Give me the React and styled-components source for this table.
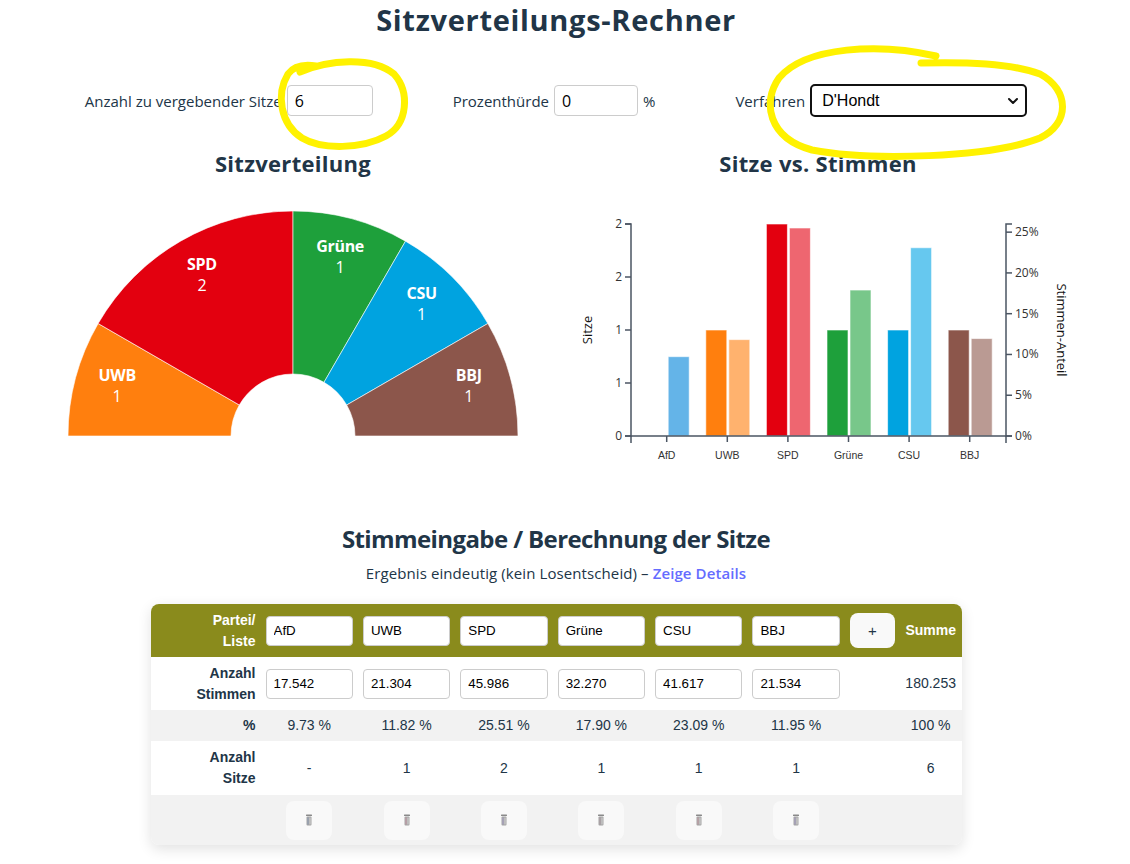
import React from "react";
import styled, { createGlobalStyle } from "styled-components";
import { ChevronDown } from "lucide-react";

const GlobalStyle = createGlobalStyle`
  body {
    margin: 0;
    background: #ffffff;
    color: #213547;
    font-family: "Segoe UI", "Open Sans", sans-serif;
  }
`;

const parties = [
  { name: "AfD", votes: "17.542", pct: 9.73, seats: 0, color: "#0489db", light: "#64b4e8", trash: "#8fa0b8" },
  { name: "UWB", votes: "21.304", pct: 11.82, seats: 1, color: "#ff7f0e", light: "#ffb26e", trash: "#c89aa8" },
  { name: "SPD", votes: "45.986", pct: 25.51, seats: 2, color: "#e3000f", light: "#ee6670", trash: "#a7a0c8" },
  { name: "Grüne", votes: "32.270", pct: 17.9, seats: 1, color: "#1ea03b", light: "#78c78a", trash: "#b0a0a8" },
  { name: "CSU", votes: "41.617", pct: 23.09, seats: 1, color: "#00a3e0", light: "#66c8ef", trash: "#c8a0a8" },
  { name: "BBJ", votes: "21.534", pct: 11.95, seats: 1, color: "#8c564b", light: "#ba9a93", trash: "#a8a0c8" },
];

const Page = styled.div`
  position: relative;
  width: 1112px;
  padding-bottom: 40px;
`;

const Title = styled.h1`
  margin: 0;
  font-size: 29px;
  line-height: 40px;
  font-weight: 700;
  text-align: center;
  letter-spacing: 0.7px;
`;

const Controls = styled.div`
  display: flex;
  justify-content: center;
  align-items: center;
  gap: 80px;
  margin-top: 44px;
  height: 33px;
`;

const Field = styled.label`
  display: flex;
  align-items: center;
  gap: 5px;
  font-size: 15px;
`;

const TextInput = styled.input`
  box-sizing: border-box;
  width: ${(p) => p.$w}px;
  height: 31px;
  padding: 0 7px;
  border: 1px solid #cccccc;
  border-radius: 4px;
  font-family: inherit;
  font-size: 16px;
  color: #000;
  background: #fff;
`;

const SelectWrap = styled.div`
  position: relative;
  display: flex;
  align-items: center;
`;

const Select = styled.select`
  appearance: none;
  box-sizing: border-box;
  width: 217px;
  height: 33px;
  padding: 0 10px;
  border: 2px solid #111;
  border-radius: 5px;
  font-family: "Liberation Sans", Arial, sans-serif;
  font-size: 16px;
  color: #000;
  background: #fff;
`;

const Chevron = styled(ChevronDown)`
  position: absolute;
  right: 6px;
  pointer-events: none;
`;

const ChartRow = styled.div`
  display: flex;
  gap: 50px;
  padding-left: 68px;
  margin-top: 31px;
`;

const ChartCol = styled.div`
  display: flex;
  flex-direction: column;
  align-items: center;
  width: ${(p) => p.$w}px;
`;

const SubHeading = styled.h2`
  margin: 0 0 22px;
  height: 30px;
  font-size: 22px;
  line-height: 30px;
  font-weight: 700;
  letter-spacing: 0.3px;
`;

const SectionHeading = styled.h2`
  margin: 59px 0 0;
  font-size: 24px;
  line-height: 30px;
  font-weight: 700;
  text-align: center;
  letter-spacing: -0.6px;
`;

const Note = styled.p`
  margin: 8px 0 0;
  font-size: 15px;
  line-height: 22px;
  text-align: center;
  letter-spacing: 0.1px;
`;

const DetailsLink = styled.a`
  color: #646cff;
  font-weight: 600;
  text-decoration: none;
`;

const TableCard = styled.div`
  width: 811px;
  margin: 20px auto 0;
  border-radius: 8px;
  overflow: hidden;
  box-shadow: 0 4px 14px rgba(0, 0, 0, 0.12);
`;

const Table = styled.table`
  width: 100%;
  border-collapse: collapse;
  table-layout: fixed;
  font-family: "Liberation Sans", Arial, sans-serif;
  font-size: 14px;
  line-height: 21px;
  color: #213547;
`;

const Row = styled.tr`
  height: ${(p) => p.$h}px;
  background: ${(p) => (p.$head ? "#8a8b1c" : p.$shade ? "#f2f2f2" : "#ffffff")};
  color: ${(p) => (p.$head ? "#ffffff" : "#213547")};
`;

const Label = styled.th`
  padding: 0 5px;
  text-align: right;
  font-weight: 700;
`;

const Cell = styled.td`
  padding: 0 5px;
  text-align: center;
  font-weight: ${(p) => (p.$bold ? 700 : 400)};
`;

const CellInput = styled.input`
  box-sizing: border-box;
  width: 100%;
  height: 30px;
  padding: 0 7px;
  border: 1px solid #cccccc;
  border-radius: 4px;
  font-family: "Liberation Sans", Arial, sans-serif;
  font-size: 13.33px;
  color: #000;
  background: #fff;
`;

const SoftButton = styled.button`
  display: inline-flex;
  align-items: center;
  justify-content: center;
  width: ${(p) => p.$w}px;
  height: ${(p) => p.$h}px;
  padding: 0;
  border: 1px solid transparent;
  border-radius: 8px;
  background: #f9f9f9;
  color: #213547;
  font-family: "Liberation Sans", Arial, sans-serif;
  font-size: 15px;
  cursor: pointer;
`;

const ChartSvg = styled.svg`
  overflow: visible;
`;

const Overlay = styled.svg`
  position: absolute;
  left: 0;
  top: 0;
  pointer-events: none;
`;

function arcPath(a0, a1, R, r, cx, cy) {
  const pt = (a, rad) => [cx + rad * Math.cos(a), cy - rad * Math.sin(a)];
  const [x0, y0] = pt(a0, R);
  const [x1, y1] = pt(a1, R);
  const [x2, y2] = pt(a1, r);
  const [x3, y3] = pt(a0, r);
  return `M${x0},${y0} A${R},${R} 0 0 1 ${x1},${y1} L${x2},${y2} A${r},${r} 0 0 0 ${x3},${y3} Z`;
}

function SeatPie() {
  const cx = 225;
  const cy = 236;
  const total = parties.reduce((s, p) => s + p.seats, 0);
  let start = Math.PI;
  const slices = parties
    .filter((p) => p.seats > 0)
    .map((p) => {
      const a0 = start;
      const a1 = start - (p.seats / total) * Math.PI;
      start = a1;
      const mid = (a0 + a1) / 2;
      return {
        ...p,
        d: arcPath(a0, a1, 225, 62, cx, cy),
        lx: cx + 182 * Math.cos(mid),
        ly: cy - 182 * Math.sin(mid),
      };
    });
  return (
    <ChartSvg width="450" height="240" fontFamily='"Segoe UI", "Open Sans", sans-serif'>
      {slices.map((s) => (
        <path key={s.name} d={s.d} fill={s.color} stroke="#ffffff" strokeWidth="0.6" />
      ))}
      {slices.map((s) => (
        <g key={s.name + "l"} fill="#ffffff" textAnchor="middle" fontSize="16">
          <text x={s.lx} y={s.ly - 8} fontWeight="700" letterSpacing="-0.3">
            {s.name}
          </text>
          <text x={s.lx} y={s.ly + 13}>
            {s.seats}
          </text>
        </g>
      ))}
    </ChartSvg>
  );
}

function SeatBars() {
  const left = 63;
  const right = 438;
  const top = 24;
  const base = 236;
  const h = base - top;
  const ySeat = (v) => base - (v / 2) * h;
  const yPct = (v) => base - (v / 26) * h;
  const axis = "#4b5563";
  const seatTicks = [0, 0.5, 1, 1.5, 2];
  const pctTicks = [0, 5, 10, 15, 20, 25];
  return (
    <ChartSvg width="500" height="265" fontFamily='"Segoe UI", "Open Sans", sans-serif'>
      {parties.map((p, i) => {
        const c = 98.7 + 60.6 * i;
        return (
          <g key={p.name}>
            {p.seats > 0 && (
              <rect x={c - 21.5} y={ySeat(p.seats)} width="21" height={base - ySeat(p.seats)} fill={p.color} stroke="#ffffff" strokeOpacity="0.6" />
            )}
            <rect x={c + 1.5} y={yPct(p.pct)} width="21" height={base - yPct(p.pct)} fill={p.light} stroke="#ffffff" strokeOpacity="0.6" />
            <line x1={c} x2={c} y1={base} y2={base + 6} stroke={axis} strokeWidth="1.5" />
            <text x={c} y={base + 23} textAnchor="middle" fontSize="10.5" fill="#333" fontFamily='"Liberation Sans", Arial, sans-serif'>
              {p.name}
            </text>
          </g>
        );
      })}
      <path d={`M${left},${base + 7} V${base} H${right} V${base + 7}`} fill="none" stroke={axis} strokeWidth="1.5" />
      <path d={`M${left - 6},${top} H${left} V${base} H${left - 6}`} fill="none" stroke={axis} strokeWidth="1.5" />
      {seatTicks.map((t) => (
        <g key={"s" + t}>
          <line x1={left - 6} x2={left} y1={ySeat(t)} y2={ySeat(t)} stroke={axis} strokeWidth="1.5" />
          <text x={left - 9} y={ySeat(t) + 4} textAnchor="end" fontSize="12" fill="#333">
            {Math.round(t + 0.001)}
          </text>
        </g>
      ))}
      <path d={`M${right + 6},${top} H${right} V${base} H${right + 6}`} fill="none" stroke={axis} strokeWidth="1.5" />
      {pctTicks.map((t) => (
        <g key={"p" + t}>
          <line x1={right} x2={right + 6} y1={yPct(t)} y2={yPct(t)} stroke={axis} strokeWidth="1.5" />
          <text x={right + 9} y={yPct(t) + 4} fontSize="12" fill="#333">
            {t}%
          </text>
        </g>
      ))}
      <text transform="translate(24,130) rotate(-90)" textAnchor="middle" fontSize="13" fill="#111">
        Sitze
      </text>
      <text transform="translate(489,130) rotate(90)" textAnchor="middle" fontSize="13" fill="#111">
        Stimmen-Anteil
      </text>
    </ChartSvg>
  );
}

function TrashIcon({ tint }) {
  return (
    <svg width="8" height="12" viewBox="0 0 8 12">
      <rect x="1" y="0.5" width="6" height="1.5" rx="0.5" fill="#8a8a8a" />
      <rect x="1.5" y="2.5" width="5" height="9" rx="1" fill="#a3a3a3" />
      <rect x="2.5" y="3.5" width="1" height="7" fill={tint} />
      <rect x="4.5" y="3.5" width="1" height="7" fill="#d8d8d8" />
    </svg>
  );
}

function Scribbles() {
  return (
    <Overlay width="1130" height="864">
      <g fill="none" stroke="#fff200" strokeWidth="7" strokeLinecap="round" strokeLinejoin="round">
        <path d="M300 72 C328 60, 372 56, 394 74 C410 92, 408 124, 386 136 C362 149, 322 150, 302 138 C280 124, 276 94, 288 74 C294 66, 304 64, 316 66" />
        <path d="M936 56 C880 43, 806 46, 779 78 C762 102, 768 138, 812 150 C870 161, 990 158, 1040 138 C1070 124, 1070 90, 1040 74 C1010 63, 966 62, 921 63" />
      </g>
    </Overlay>
  );
}

export default function App() {
  return (
    <Page>
      <GlobalStyle />
      <Title>Sitzverteilungs-Rechner</Title>
      <Controls>
        <Field>
          Anzahl zu vergebender Sitze
          <TextInput $w={86} defaultValue="6" />
        </Field>
        <Field>
          Prozenthürde
          <TextInput $w={84} defaultValue="0" />
          <span>%</span>
        </Field>
        <Field as="div">
          Verfahren
          <SelectWrap>
            <Select defaultValue="dhondt">
              <option value="dhondt">D'Hondt</option>
              <option value="sl">Sainte-Laguë</option>
              <option value="hn">Hare-Niemeyer</option>
            </Select>
            <Chevron size={16} strokeWidth={3} color="#111" />
          </SelectWrap>
        </Field>
      </Controls>

      <ChartRow>
        <ChartCol $w={450}>
          <SubHeading>Sitzverteilung</SubHeading>
          <SeatPie />
        </ChartCol>
        <ChartCol $w={500}>
          <SubHeading>Sitze vs. Stimmen</SubHeading>
          <SeatBars />
        </ChartCol>
      </ChartRow>

      <SectionHeading>Stimmeingabe / Berechnung der Sitze</SectionHeading>
      <Note>
        Ergebnis eindeutig (kein Losentscheid) – <DetailsLink href="#">Zeige Details</DetailsLink>
      </Note>

      <TableCard>
        <Table>
          <colgroup>
            <col style={{ width: 110 }} />
            {parties.map((p) => (
              <col key={p.name} style={{ width: 97.4 }} />
            ))}
            <col style={{ width: 55 }} />
            <col />
          </colgroup>
          <tbody>
            <Row $head $h={53}>
              <Label>
                Partei/
                <br />
                Liste
              </Label>
              {parties.map((p) => (
                <Cell key={p.name}>
                  <CellInput defaultValue={p.name} />
                </Cell>
              ))}
              <Cell>
                <SoftButton $w={45} $h={35}>+</SoftButton>
              </Cell>
              <Cell $bold>Summe</Cell>
            </Row>
            <Row $h={53}>
              <Label>
                Anzahl
                <br />
                Stimmen
              </Label>
              {parties.map((p) => (
                <Cell key={p.name}>
                  <CellInput defaultValue={p.votes} />
                </Cell>
              ))}
              <Cell />
              <Cell>180.253</Cell>
            </Row>
            <Row $shade $h={31}>
              <Label>%</Label>
              {parties.map((p) => (
                <Cell key={p.name}>{p.pct.toFixed(2)} %</Cell>
              ))}
              <Cell />
              <Cell>100 %</Cell>
            </Row>
            <Row $h={54}>
              <Label>
                Anzahl
                <br />
                Sitze
              </Label>
              {parties.map((p) => (
                <Cell key={p.name}>{p.seats > 0 ? p.seats : "-"}</Cell>
              ))}
              <Cell />
              <Cell>6</Cell>
            </Row>
            <Row $shade $h={50}>
              <Label />
              {parties.map((p) => (
                <Cell key={p.name}>
                  <SoftButton $w={46} $h={39} title={`${p.name} entfernen`}>
                    <TrashIcon tint={p.trash} />
                  </SoftButton>
                </Cell>
              ))}
              <Cell />
              <Cell />
            </Row>
          </tbody>
        </Table>
      </TableCard>
      <Scribbles />
    </Page>
  );
}
